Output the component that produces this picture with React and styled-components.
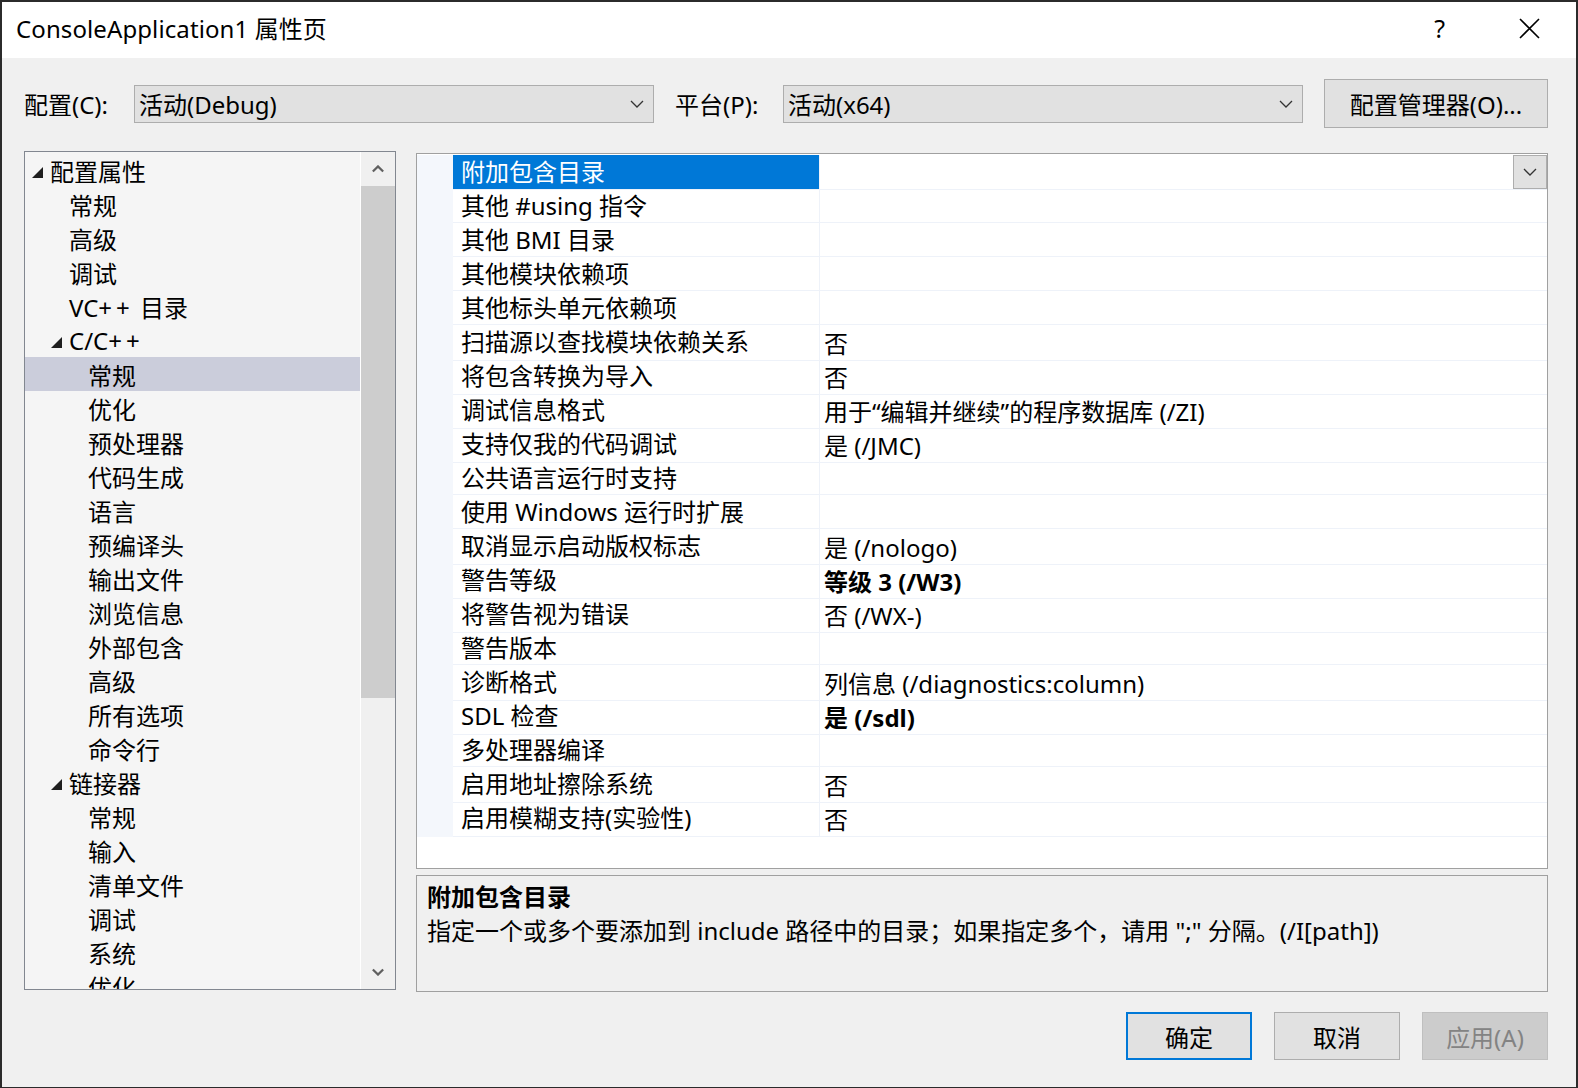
import React from 'react'
import styled, { createGlobalStyle } from 'styled-components'

const GlobalStyle = createGlobalStyle`
  html, body {
    margin: 0;
    padding: 0;
    background: #2b2b2b;
  }
  body {
    font-family: "Noto Sans", "Noto Sans CJK SC", sans-serif;
    font-size: 24px;
    color: #000;
  }
  * { box-sizing: border-box; }
`

const treeItems = [
  { label: '配置属性', level: 0, expander: true },
  { label: '常规', level: 1 },
  { label: '高级', level: 1 },
  { label: '调试', level: 1 },
  { label: 'VC++ 目录', level: 1 },
  { label: 'C/C++', level: 1, expander: true },
  { label: '常规', level: 2, selected: true },
  { label: '优化', level: 2 },
  { label: '预处理器', level: 2 },
  { label: '代码生成', level: 2 },
  { label: '语言', level: 2 },
  { label: '预编译头', level: 2 },
  { label: '输出文件', level: 2 },
  { label: '浏览信息', level: 2 },
  { label: '外部包含', level: 2 },
  { label: '高级', level: 2 },
  { label: '所有选项', level: 2 },
  { label: '命令行', level: 2 },
  { label: '链接器', level: 1, expander: true },
  { label: '常规', level: 2 },
  { label: '输入', level: 2 },
  { label: '清单文件', level: 2 },
  { label: '调试', level: 2 },
  { label: '系统', level: 2 },
  { label: '优化', level: 2 },
]

const properties = [
  { name: '附加包含目录', value: '', selected: true },
  { name: '其他 #using 指令', value: '' },
  { name: '其他 BMI 目录', value: '' },
  { name: '其他模块依赖项', value: '' },
  { name: '其他标头单元依赖项', value: '' },
  { name: '扫描源以查找模块依赖关系', value: '否' },
  { name: '将包含转换为导入', value: '否' },
  { name: '调试信息格式', value: '用于“编辑并继续”的程序数据库 (/ZI)' },
  { name: '支持仅我的代码调试', value: '是 (/JMC)' },
  { name: '公共语言运行时支持', value: '' },
  { name: '使用 Windows 运行时扩展', value: '' },
  { name: '取消显示启动版权标志', value: '是 (/nologo)' },
  { name: '警告等级', value: '等级 3 (/W3)', bold: true },
  { name: '将警告视为错误', value: '否 (/WX-)' },
  { name: '警告版本', value: '' },
  { name: '诊断格式', value: '列信息 (/diagnostics:column)' },
  { name: 'SDL 检查', value: '是 (/sdl)', bold: true },
  { name: '多处理器编译', value: '' },
  { name: '启用地址擦除系统', value: '否' },
  { name: '启用模糊支持(实验性)', value: '否' },
]

const Chevron = ({ up, thick }) => (
  <svg width={thick ? 12 : 14} height={thick ? 8 : 8} viewBox="0 0 14 8">
    <polyline
      points={up ? '1,7 7,1 13,7' : '1,1 7,7 13,1'}
      fill="none"
      stroke={thick ? '#606060' : '#333'}
      strokeWidth={thick ? 2.6 : 1.3}
    />
  </svg>
)

const Expander = () => (
  <svg width="11" height="11" viewBox="0 0 11 11">
    <polygon points="11,0 11,11 0,11" fill="#1e1e1e" />
  </svg>
)

const CloseIcon = () => (
  <svg width="21" height="21" viewBox="0 0 21 21">
    <path d="M1 1 L20 20 M20 1 L1 20" stroke="#000" strokeWidth="1.6" />
  </svg>
)

// the dialog font draws "++" with wide plus signs
const TreeLabel = ({ text }) => {
  const parts = text.split('++')
  if (parts.length === 1) return <span>{text}</span>
  return (
    <span>
      {parts[0]}
      <Plus>++</Plus>
      {parts[1]}
    </span>
  )
}

const App = () => {
  return (
    <>
      <GlobalStyle />
      <Dialog>
        <TitleBar>
          <Title>ConsoleApplication1 属性页</Title>
          <TitleControls>
            <HelpGlyph>?</HelpGlyph>
            <CloseIcon />
          </TitleControls>
        </TitleBar>

        <Body>
          <ConfigRow>
            <FieldLabel width={110}>配置(C):</FieldLabel>
            <Combo width={520}>
              <span>活动(Debug)</span>
              <Chevron />
            </Combo>
            <FieldLabel width={108} gap={21}>平台(P):</FieldLabel>
            <Combo width={520}>
              <span>活动(x64)</span>
              <Chevron />
            </Combo>
            <ManagerButton>配置管理器(O)...</ManagerButton>
          </ConfigRow>

          <Main>
            <Tree>
              <TreeList>
                {treeItems.map((item, i) => (
                  <TreeRow key={i} level={item.level} selected={item.selected}>
                    <ExpanderSlot>{item.expander && <Expander />}</ExpanderSlot>
                    <TreeLabel text={item.label} />
                  </TreeRow>
                ))}
              </TreeList>
              <ScrollBar>
                <ScrollArrow>
                  <Chevron up thick />
                </ScrollArrow>
                <ScrollTrack>
                  <ScrollThumb />
                </ScrollTrack>
                <ScrollArrow>
                  <Chevron thick />
                </ScrollArrow>
              </ScrollBar>
            </Tree>

            <RightColumn>
              <PropertyGrid>
                {properties.map((p, i) => (
                  <PropRow key={i}>
                    <Margin />
                    <PropName selected={p.selected}>{p.name}</PropName>
                    <PropValue bold={p.bold}>
                      <span>{p.value}</span>
                      {p.selected && (
                        <DropButton>
                          <Chevron />
                        </DropButton>
                      )}
                    </PropValue>
                  </PropRow>
                ))}
              </PropertyGrid>
              <Description>
                <DescTitle>附加包含目录</DescTitle>
                <DescText>
                  指定一个或多个要添加到 include 路径中的目录；如果指定多个，请用 ";" 分隔。(/I[path])
                </DescText>
              </Description>
            </RightColumn>
          </Main>

          <Footer>
            <DialogButton primary>确定</DialogButton>
            <DialogButton>取消</DialogButton>
            <DialogButton disabled>应用(A)</DialogButton>
          </Footer>
        </Body>
      </Dialog>
    </>
  )
}

const Dialog = styled.div`
  width: 1574px;
  height: 1085px;
  margin: 2px 0 0 2px;
  background: #f0f0f0;
  display: flex;
  flex-direction: column;
  overflow: hidden;
`

const TitleBar = styled.div`
  height: 56px;
  flex-shrink: 0;
  background: #fff;
  display: flex;
  align-items: center;
  padding: 0 36px 6px 14px;
`

const Title = styled.div`
  flex: 1;
  font-size: 24px;
  letter-spacing: 0.1px;
  white-space: nowrap;
`

const TitleControls = styled.div`
  display: flex;
  align-items: center;
  gap: 74px;
  padding-top: 2px;
`

const HelpGlyph = styled.span`
  font-size: 25px;
  line-height: 1;
`

const Body = styled.div`
  flex: 1;
  padding: 21px 28px 0 22px;
  display: flex;
  flex-direction: column;
`

const ConfigRow = styled.div`
  display: flex;
  align-items: center;
  height: 49px;
`

const FieldLabel = styled.div`
  width: ${(p) => p.width}px;
  margin-left: ${(p) => p.gap || 0}px;
  white-space: nowrap;
`

const Combo = styled.div`
  width: ${(p) => p.width}px;
  height: 38px;
  background: #e1e1e1;
  border: 1px solid #adadad;
  display: flex;
  align-items: center;
  justify-content: space-between;
  padding: 0 9px 0 4px;
  white-space: nowrap;
`

const ManagerButton = styled.div`
  margin-left: auto;
  width: 224px;
  height: 49px;
  background: #e1e1e1;
  border: 1px solid #adadad;
  display: flex;
  align-items: center;
  justify-content: center;
  white-space: nowrap;
`

const Main = styled.div`
  margin-top: 23px;
  display: grid;
  grid-template-columns: 372px 1fr;
  column-gap: 20px;
`

const Tree = styled.div`
  height: 839px;
  border: 1px solid #828790;
  background: #f5f5f5;
  display: flex;
  overflow: hidden;
`

const TreeList = styled.div`
  flex: 1;
  padding-top: 1px;
  overflow: hidden;
  border-right: 1px solid #fff;
`

const TreeRow = styled.div`
  height: 34px;
  display: flex;
  align-items: center;
  padding-left: ${(p) => 7 + p.level * 19}px;
  background: ${(p) => (p.selected ? '#cbcddb' : 'transparent')};
  white-space: nowrap;
`

const Plus = styled.span`
  letter-spacing: 4px;
`

const ExpanderSlot = styled.span`
  width: 18px;
  flex-shrink: 0;
  display: flex;
  align-items: center;
  padding-top: 4px;
`

const ScrollBar = styled.div`
  width: 34px;
  flex-shrink: 0;
  background: #f0f0f0;
  display: flex;
  flex-direction: column;
`

const ScrollArrow = styled.div`
  height: 34px;
  flex-shrink: 0;
  display: flex;
  align-items: center;
  justify-content: center;
`

const ScrollTrack = styled.div`
  flex: 1;
`

const ScrollThumb = styled.div`
  height: 512px;
  background: #cdcdcd;
`

const RightColumn = styled.div`
  display: flex;
  flex-direction: column;
  padding-top: 2px;
  gap: 6px;
`

const PropertyGrid = styled.div`
  height: 716px;
  border: 1px solid #a0a0a0;
  background: #fff;
  padding-top: 1px;
`

const PropRow = styled.div`
  display: grid;
  grid-template-columns: 36px 366px 1fr;
  height: 34px;
`

const Margin = styled.div`
  background: #f4f7fc;
`

const PropName = styled.div`
  padding-left: 8px;
  line-height: 33px;
  border-bottom: 1px solid #eef2f9;
  white-space: nowrap;
  background: ${(p) => (p.selected ? '#0078d7' : 'transparent')};
  color: ${(p) => (p.selected ? '#fff' : '#000')};
`

const PropValue = styled.div`
  display: flex;
  align-items: center;
  justify-content: space-between;
  padding-left: 4px;
  border-left: 1px solid #eef2f9;
  border-bottom: 1px solid #eef2f9;
  font-weight: ${(p) => (p.bold ? 700 : 400)};
  white-space: nowrap;
`

const DropButton = styled.div`
  width: 34px;
  height: 34px;
  align-self: flex-start;
  background: #e1e1e1;
  border: 1px solid #adadad;
  display: flex;
  align-items: center;
  justify-content: center;
`

const Description = styled.div`
  height: 117px;
  border: 1px solid #a0a0a0;
  background: #f0f0f0;
  padding: 4px 10px;
`

const DescTitle = styled.div`
  font-weight: 700;
  line-height: 34px;
`

const DescText = styled.div`
  line-height: 34px;
  white-space: nowrap;
`

const Footer = styled.div`
  margin-top: 20px;
  display: flex;
  justify-content: flex-end;
  gap: 22px;
`

const DialogButton = styled.div`
  width: 126px;
  height: 48px;
  display: flex;
  align-items: center;
  justify-content: center;
  background: ${(p) => (p.disabled ? '#cccccc' : '#e1e1e1')};
  border: ${(p) => (p.primary ? '2px solid #0078d7' : `1px solid ${p.disabled ? '#bfbfbf' : '#adadad'}`)};
  color: ${(p) => (p.disabled ? '#838383' : '#000')};
`

export default App
